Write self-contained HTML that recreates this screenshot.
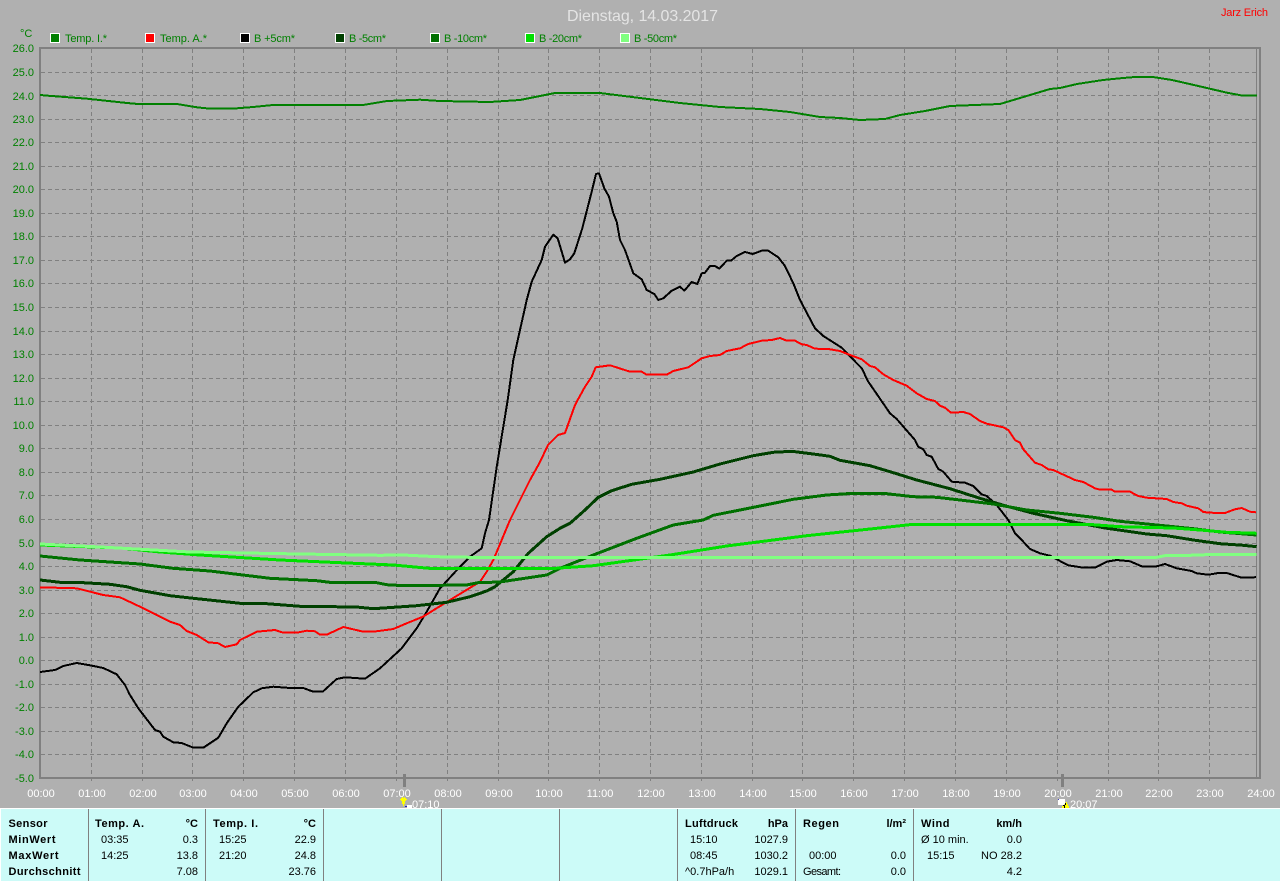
<!DOCTYPE html>
<html lang="de">
<head>
<meta charset="utf-8">
<title>Dienstag, 14.03.2017</title>
<style>
html,body{margin:0;padding:0;background:#b0b0b0;width:1280px;height:881px;overflow:hidden}
svg{display:block}
text{font-family:"Liberation Sans",sans-serif;font-size:11px}
.c{fill:none;stroke-linejoin:round;shape-rendering:crispEdges}
.b{font-weight:bold}
</style>
</head>
<body>
<svg xmlns="http://www.w3.org/2000/svg" width="1280" height="881" viewBox="0 0 1280 881">
<rect width="1280" height="881" fill="#b0b0b0"/>

<!-- grid -->
<path fill="none" stroke="#808080" stroke-width="1" stroke-dasharray="4 3" shape-rendering="crispEdges" d="M41 72.5H1256M41 95.5H1256M41 119.5H1256M41 142.5H1256M41 166.5H1256M41 189.5H1256M41 213.5H1256M41 236.5H1256M41 260.5H1256M41 283.5H1256M41 307.5H1256M41 331.5H1256M41 354.5H1256M41 378.5H1256M41 401.5H1256M41 425.5H1256M41 448.5H1256M41 472.5H1256M41 495.5H1256M41 519.5H1256M41 543.5H1256M41 566.5H1256M41 590.5H1256M41 613.5H1256M41 637.5H1256M41 660.5H1256M41 684.5H1256M41 707.5H1256M41 731.5H1256M41 754.5H1256"/>
<path fill="none" stroke="#808080" stroke-width="1" stroke-dasharray="4 3" shape-rendering="crispEdges" d="M91.5 49V783M142.5 49V783M192.5 49V783M243.5 49V783M294.5 49V783M345.5 49V783M396.5 49V783M447.5 49V783M498.5 49V783M548.5 49V783M599.5 49V783M650.5 49V783M701.5 49V783M752.5 49V783M802.5 49V783M853.5 49V783M904.5 49V783M955.5 49V783M1006.5 49V783M1057.5 49V783M1108.5 49V783M1158.5 49V783M1209.5 49V783"/>

<!-- axes -->
<rect x="39" y="47" width="1222" height="2" fill="#808080"/>
<rect x="39" y="47" width="2" height="732" fill="#808080"/>
<rect x="39" y="777" width="1222" height="2" fill="#808080"/>
<rect x="1259" y="47" width="2" height="732" fill="#808080"/>
<rect x="1256" y="49" width="1" height="728" fill="#808080"/>
<rect x="403" y="774" width="3" height="13" fill="#808080"/>
<rect x="1061" y="774" width="3" height="13" fill="#808080"/>

<!-- curves -->
<polyline class="c" stroke="#008000" stroke-width="2" points="40,95 48,95.7 87,98.7 127,103 138,104 177,104 197,107.3 210,108.7 232,108.7 253,107 273,105 363,105 387,101 420,99.7 440,101 490,102 520,100 555,93 600,93 640,98 680,103 720,107 760,109 790,112 820,117 840,118 860,120 885,119 900,115 925,111 950,106 1000,104 1020,98 1040,92 1050,89 1060,88 1077,84 1103,80 1123,78 1135,77 1153,77 1172,80 1197,85.7 1227,92.7 1243,95.7 1257,95.7"/>

<polyline class="c" stroke="#000" stroke-width="2" points="40,672 55,670 63.3,666 76.7,663 90,665.3 103.3,668 116.7,674.3 125,685 130,695 138.3,708.3 155,730 160,731.7 163.3,736.7 173.3,742.3 181.7,743 193.3,747.7 203.3,747.7 218.3,737.7 226.7,723.3 238.3,706.7 253.3,692.3 261.7,688.3 273.3,686.7 290,688 303.3,688 313.3,691.7 322.7,691.7 336.7,679 345,677.3 365,678.7 380,668.3 401.7,648.3 416.7,628.3 426.7,611.7 440,588.3 460,566.7 470,556.7 481.7,548.3 485,533.3 489,520 497,465 507.7,400 513.3,360 520,330 526.7,300 531.7,281.7 541.7,260 545,246.7 553.3,234.7 557.7,238.3 565,262.7 570,259.3 574.3,253.3 582.3,228.3 591.7,191.7 596,174 599,173.3 604.3,188.3 609,196.7 613.3,213.3 616.7,221.7 620,240 625,250 633.3,273.3 641.7,279.3 646.7,290 654.3,294 658.3,300 663.3,298.3 671.7,290.7 680,286.7 684.3,290.7 691.7,282 697.3,284 701.7,273.3 705,272.7 710,266 715,266 719.3,268.7 726.7,260.7 731,260.7 736.7,256 745,252 752.7,254 761.7,250.7 768.3,250.7 778.3,257.3 785,266 793.3,283.3 800,300 815,328.3 823.3,336 841.7,347.7 861.7,368.3 868.3,381.7 890,413.3 896.7,419 915,440 918.3,446.7 923.3,449.3 926.7,455 931.7,456.7 938.3,469 943.3,471.7 951.7,481.7 965,482.7 973.3,486 981.7,494.3 986.7,496 996.7,505 1008.3,520 1015,533.3 1023.3,541.7 1030,549 1040,553.3 1050,555.7 1060,561 1068.3,565.3 1083.3,567.7 1095,567.7 1106.7,561.7 1116.7,560 1130,561.3 1141.7,566.3 1156.7,566.3 1165,564 1176.7,568.3 1191.7,571 1196.7,573.3 1208.3,574.7 1218.3,573 1226.7,573 1241.7,577.7 1253.3,577.7 1256,576.7"/>

<polyline class="c" stroke="#f00" stroke-width="2" points="40,587.3 76.7,588.3 103.3,595 120,597.3 140,606.7 170,621.7 180,625 186.7,631 196.7,635 208.3,642.3 218.3,643.3 225,647 236.7,644.3 240,640 256.7,631.7 275,630 283.3,632.7 296.7,632.7 306.7,630.7 315,631.3 320,634.7 326.7,634.7 343.3,627 361.7,631.3 373.3,631.7 393.3,629 406.7,623.3 423,616.7 450,600 473,586 480,581.7 486.7,571.7 493.3,560 501.7,540 510,520 520,500 530,480 540,462 548,445 558,435 565,433 575,405 577.7,400 585,386.7 591.7,376.7 595.7,367.3 610,365.3 630,371.7 641.7,371.7 646.7,374.7 666.7,374.7 673.3,371 688.3,367.3 701.7,358.3 710,356 720,355 726.7,351 740,348.3 748.3,344 761.7,340.7 771.7,340 780,338 786.7,340.7 795,340.7 801.7,344.3 806.7,345 815,348.7 828.3,349 840,351 848.3,354.3 861.7,359.3 870,366 875,367.3 883.3,374.3 893.3,380 906.7,385.7 916.7,393.3 926.7,399 935,401 940,405.7 945,407.7 951,412.7 963.3,412 970,414 980,421 986.7,423.7 1003.3,427.3 1008.3,430 1015,440 1020,442.7 1023.3,449.3 1035,462.7 1041.7,465 1048.3,469.3 1053.3,470 1075,480 1083.3,482 1095,488.3 1100,489.7 1111.7,489.7 1115,491.7 1130,491.7 1138.3,496 1146.7,497.7 1166.7,499 1173.3,502 1181.7,503.3 1186.7,505.7 1198.3,508.3 1203.3,512 1210,512.7 1225,513 1235,509.3 1241.7,508 1250,511.7 1256,512.3"/>

<polyline class="c" stroke="#004000" stroke-width="3" points="40,580 60,582.3 83.3,582.7 110,584.3 126.7,586.7 140,590.3 170,595.7 193.3,598.3 240,603.3 266.7,603.7 300,606.3 356.7,607 373.3,608.7 416.7,605.7 446.7,602.3 470,596.7 486.7,591 495,586.7 513.3,571.7 528.3,553.3 546.7,536.7 560,528.3 570,523.3 585,510 598.3,497.3 611.7,490.7 631.7,484.3 660,479.3 693.3,472 720,464 753.3,455.7 773.3,452.3 791.7,451.3 813.3,454 830,456.3 840,460.3 870,465.7 893.3,472.7 916.7,480 950,488.7 980,498.3 1005,505.7 1033.3,513.3 1066.7,520.7 1106.7,528.3 1146.7,534 1166.7,535.7 1193.3,540 1220,543.7 1243.3,545.3 1256.7,546.7"/>

<polyline class="c" stroke="#007000" stroke-width="3" points="40,556 80,560 140,564 173,568.3 210,571 270,578.3 316.7,580.7 333,582.7 376.7,582.7 386.7,584.7 403.3,585.7 466.7,585 478,582.7 500,582 546.7,575 560,568.3 593.3,555 636.7,538.3 673.3,525 703.3,520 713.3,515.3 760,506 793.3,499.3 826.7,495 853.3,493.3 886.7,493.7 913.3,496.7 936.7,497.3 960,500 993.3,504 1026.7,510 1060,513.3 1093.3,517.3 1120,521.3 1160,525.3 1193.3,528.7 1220,532 1256.7,535"/>

<polyline class="c" stroke="#00e000" stroke-width="3" points="40,545 120,548 160,552 200,555 280,560 340,562.7 393.3,565 433.3,568.7 550,568.7 593.3,565.7 670,555 726.7,546 806.7,535.7 876.7,528.3 913.3,524.3 1093.3,524.7 1120,526.7 1173.3,528 1200,530 1226.7,532.3 1256.7,533.3"/>

<polyline class="c" stroke="#80ff80" stroke-width="3" points="40,544 100,547 190,552 300,554 380,555.3 403,555 436.7,556.7 470,557.3 1156.7,557.3 1166.7,555.3 1190,555.3 1216.7,554.3 1256.7,554.3"/>

<!-- title -->
<text x="567" y="21" fill="#e4e4e4" style="font-size:16px" textLength="151">Dienstag, 14.03.2017</text>
<text x="1268" y="16" fill="#f00" text-anchor="end" textLength="47">Jarz Erich</text>

<!-- legend -->
<g stroke="#fff" stroke-width="1" shape-rendering="crispEdges">
<rect x="50.5" y="33.5" width="9" height="9" fill="#008000"/>
<rect x="145.5" y="33.5" width="9" height="9" fill="#f00"/>
<rect x="240.5" y="33.5" width="9" height="9" fill="#000"/>
<rect x="335.5" y="33.5" width="9" height="9" fill="#004000"/>
<rect x="430.5" y="33.5" width="9" height="9" fill="#007000"/>
<rect x="525.5" y="33.5" width="9" height="9" fill="#00e000"/>
<rect x="620.5" y="33.5" width="9" height="9" fill="#80ff80"/>
</g>
<g fill="#008000">
<text x="20" y="37">°C</text>
<text x="65" y="42" textLength="42">Temp. I.*</text>
<text x="160" y="42" textLength="47">Temp. A.*</text>
<text x="254" y="42" textLength="41">B +5cm*</text>
<text x="349" y="42" textLength="37">B -5cm*</text>
<text x="444" y="42" textLength="43">B -10cm*</text>
<text x="539" y="42" textLength="43">B -20cm*</text>
<text x="634" y="42" textLength="43">B -50cm*</text>
</g>

<!-- y labels -->
<g fill="#008000" text-anchor="end">
<text x="34" y="52">26.0</text><text x="34" y="76">25.0</text><text x="34" y="100">24.0</text><text x="34" y="123">23.0</text><text x="34" y="146">22.0</text><text x="34" y="170">21.0</text><text x="34" y="193">20.0</text><text x="34" y="217">19.0</text><text x="34" y="240">18.0</text><text x="34" y="264">17.0</text><text x="34" y="287">16.0</text><text x="34" y="311">15.0</text><text x="34" y="335">14.0</text><text x="34" y="358">13.0</text><text x="34" y="382">12.0</text><text x="34" y="405">11.0</text><text x="34" y="429">10.0</text><text x="34" y="452">9.0</text><text x="34" y="476">8.0</text><text x="34" y="499">7.0</text><text x="34" y="523">6.0</text><text x="34" y="547">5.0</text><text x="34" y="570">4.0</text><text x="34" y="594">3.0</text><text x="34" y="617">2.0</text><text x="34" y="641">1.0</text><text x="34" y="664">0.0</text><text x="34" y="688">-1.0</text><text x="34" y="711">-2.0</text><text x="34" y="735">-3.0</text><text x="34" y="758">-4.0</text><text x="34" y="782">-5.0</text>
</g>

<!-- x labels -->
<g fill="#fff" text-anchor="middle">
<text x="41" y="797">00:00</text><text x="92" y="797">01:00</text><text x="143" y="797">02:00</text><text x="193" y="797">03:00</text><text x="244" y="797">04:00</text><text x="295" y="797">05:00</text><text x="346" y="797">06:00</text><text x="397" y="797">07:00</text><text x="448" y="797">08:00</text><text x="499" y="797">09:00</text><text x="549" y="797">10:00</text><text x="600" y="797">11:00</text><text x="651" y="797">12:00</text><text x="702" y="797">13:00</text><text x="753" y="797">14:00</text><text x="803" y="797">15:00</text><text x="854" y="797">16:00</text><text x="905" y="797">17:00</text><text x="956" y="797">18:00</text><text x="1007" y="797">19:00</text><text x="1058" y="797">20:00</text><text x="1109" y="797">21:00</text><text x="1159" y="797">22:00</text><text x="1210" y="797">23:00</text><text x="1261" y="797">24:00</text>
</g>

<!-- sunrise / sunset -->
<text x="412" y="808" fill="#fff">07:10</text>
<text x="1070" y="808" fill="#fff">20:07</text>
<g shape-rendering="crispEdges">
<rect x="407" y="805" width="5" height="3" fill="#fff"/>
<path d="M401 798h1v-1h1v1h1v-1h1v1h1v1h1v1h-1v1h-1v3h-1v2h-1v-2h-1v-3h-1v-1h-1v-1h1z" fill="#ff0"/>
<rect x="405" y="806" width="2" height="1" fill="#2020c0"/>
<rect x="1058" y="799" width="7" height="6" fill="#fff"/>
<rect x="1058" y="799" width="1" height="1" fill="#4040c0"/>
<path d="M1066 802h1v2h1v2h1v2h-7v-2h2v-2h1v-1z" fill="#ff0"/>
<path d="M1065 803h1v2h-1v3h-1v-2h-1v-1h2z" fill="#000"/>
</g>

<!-- panel -->
<rect x="0" y="808" width="1280" height="73" fill="#ccfbf8"/>
<rect x="0" y="808" width="1280" height="1" fill="#fff"/>
<rect x="0" y="808" width="1" height="73" fill="#fff"/>
<g fill="#808080">
<rect x="88" y="809" width="1" height="72"/><rect x="205" y="809" width="1" height="72"/><rect x="323" y="809" width="1" height="72"/><rect x="441" y="809" width="1" height="72"/><rect x="559" y="809" width="1" height="72"/><rect x="677" y="809" width="1" height="72"/><rect x="795" y="809" width="1" height="72"/><rect x="913" y="809" width="1" height="72"/>
</g>
<g fill="#000">
<text class="b" x="8.5" y="827" textLength="39">Sensor</text>
<text class="b" x="8.5" y="843" textLength="47">MinWert</text>
<text class="b" x="8.5" y="859" textLength="50">MaxWert</text>
<text class="b" x="8.5" y="875" textLength="72">Durchschnitt</text>

<text class="b" x="95" y="827" textLength="49">Temp. A.</text>
<text class="b" x="198" y="827" text-anchor="end">°C</text>
<text x="101" y="843">03:35</text><text x="198" y="843" text-anchor="end">0.3</text>
<text x="101" y="859">14:25</text><text x="198" y="859" text-anchor="end">13.8</text>
<text x="198" y="875" text-anchor="end">7.08</text>

<text class="b" x="213" y="827" textLength="45">Temp. I.</text>
<text class="b" x="316" y="827" text-anchor="end">°C</text>
<text x="219" y="843">15:25</text><text x="316" y="843" text-anchor="end">22.9</text>
<text x="219" y="859">21:20</text><text x="316" y="859" text-anchor="end">24.8</text>
<text x="316" y="875" text-anchor="end">23.76</text>

<text class="b" x="685" y="827" textLength="53">Luftdruck</text>
<text class="b" x="788" y="827" text-anchor="end">hPa</text>
<text x="690" y="843">15:10</text><text x="788" y="843" text-anchor="end">1027.9</text>
<text x="690" y="859">08:45</text><text x="788" y="859" text-anchor="end">1030.2</text>
<text x="685" y="875">^0.7hPa/h</text><text x="788" y="875" text-anchor="end">1029.1</text>

<text class="b" x="803" y="827" textLength="36">Regen</text>
<text class="b" x="906" y="827" text-anchor="end">l/m²</text>
<text x="809" y="859">00:00</text><text x="906" y="859" text-anchor="end">0.0</text>
<text x="803" y="875" textLength="38">Gesamt:</text><text x="906" y="875" text-anchor="end">0.0</text>

<text class="b" x="921" y="827" textLength="28.5">Wind</text>
<text class="b" x="1022" y="827" text-anchor="end">km/h</text>
<text x="921" y="843">Ø 10 min.</text><text x="1022" y="843" text-anchor="end">0.0</text>
<text x="927" y="859">15:15</text><text x="1022" y="859" text-anchor="end">NO 28.2</text>
<text x="1022" y="875" text-anchor="end">4.2</text>
</g>
</svg>
</body>
</html>
